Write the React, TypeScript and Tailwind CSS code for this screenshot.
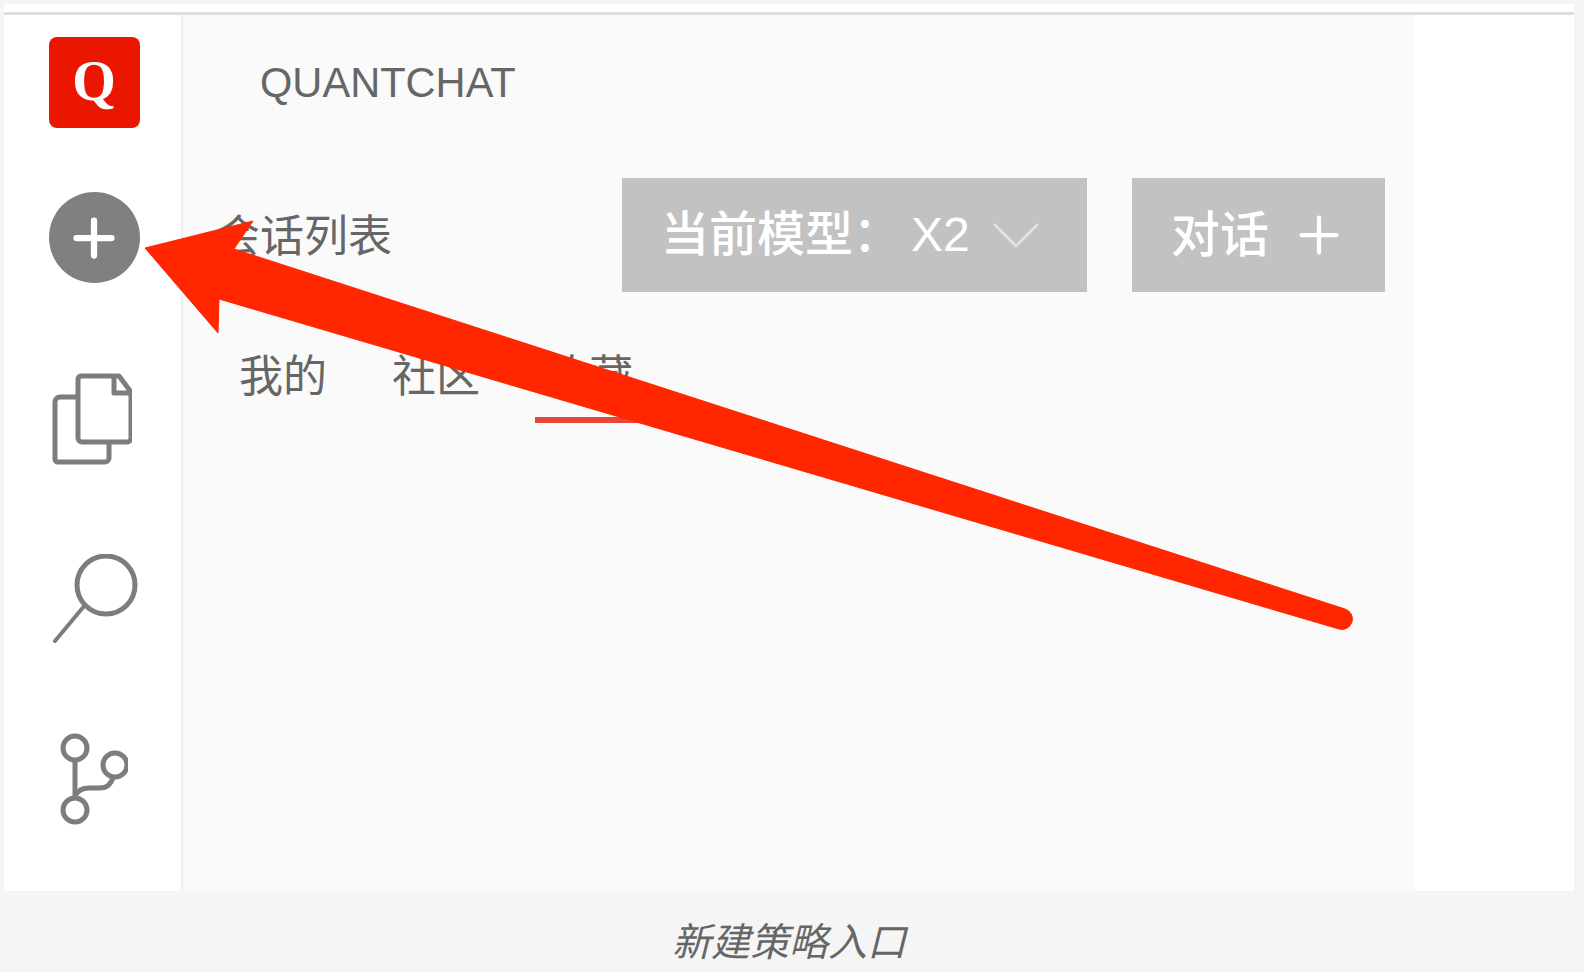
import { Plus } from 'lucide-react'

const cjk = 'font-["Liberation_Sans","Noto_Sans_CJK_SC",sans-serif]'

function Sidebar() {
  return (
    <div className="flex w-[179px] shrink-0 flex-col items-center border-r-2 border-[#efeff1] bg-white pt-[22px] pl-[3px]">
      <div className="flex h-[91px] w-[91px] items-center justify-center rounded-lg bg-[#ea1600]">
        <span className='mt-[-3px] font-["Liberation_Serif",serif] text-[56px] leading-none font-bold text-white'>Q</span>
      </div>
      <div className="mt-[64px] flex h-[91px] w-[91px] items-center justify-center rounded-full bg-[#808080]">
        <Plus className="h-[60px] w-[60px] text-white" strokeWidth={2.5} />
      </div>
      {/* files */}
      <svg className="mt-[90px] ml-[-4px]" width="80" height="92" viewBox="0 0 80 92" fill="none" stroke="#7d7d7d" strokeWidth="5" strokeLinejoin="round">
        <path d="M25 24H8a5 5 0 0 0-5 5v57a3 3 0 0 0 3 3h47a4 4 0 0 0 4-4V70" />
        <path d="M29 3h38l12 16v46a4 4 0 0 1-4 4H30a4 4 0 0 1-4-4V7a4 4 0 0 1 3-4z" />
        <path d="M62 3v17h17" />
      </svg>
      {/* search */}
      <svg className="mt-[89px] ml-[3px]" width="86" height="90" viewBox="0 0 86 90" fill="none" stroke="#7d7d7d" strokeWidth="5" strokeLinecap="round">
        <circle cx="53" cy="31" r="29" />
        <path d="M32 51 2 87" strokeWidth="4" />
      </svg>
      {/* branch */}
      <svg className="mt-[89px] ml-[-2px]" width="70" height="92" viewBox="0 0 70 92" fill="none" stroke="#7d7d7d" strokeWidth="5">
        <circle cx="17" cy="15" r="12" />
        <circle cx="57" cy="32" r="12" />
        <circle cx="17" cy="77" r="12" />
        <path d="M17 27v38" />
        <path d="M17 63c3-6 7-8 14-8h11c7 0 10-3 13-10" />
      </svg>
    </div>
  )
}

function Panel() {
  return (
    <div className={`flex w-[1232px] shrink-0 flex-col bg-[#fafafa] ${cjk} text-[#666666]`}>
      <div className="h-[163px] pt-[47px] pl-[77px] text-[41.6px] leading-none">QUANTCHAT</div>
      <div className="flex h-[114px] items-center pr-[30px] pl-[33px]">
        <span className="pt-[3px] text-[44px] leading-none">会话列表</span>
        <div className="ml-[230px] flex h-[114px] w-[465px] items-center bg-[#c2c2c2] pl-[39px] text-[48px] leading-none font-medium text-white">
          <span>当前模型：</span>
          <span className="ml-[10px]">X2</span>
          <svg className="ml-[23px]" width="46" height="25" viewBox="0 0 46 25" fill="none" stroke="#e4e4e4" strokeWidth="2.5">
            <path d="M1 1 23 23 45 1" />
          </svg>
        </div>
        <div className="ml-[45px] flex h-[114px] w-[253px] items-center bg-[#c2c2c2] pl-[39px] text-[49px] leading-none font-medium text-white">
          <span>对话</span>
          <Plus className="ml-[20px] h-[60px] w-[60px]" strokeWidth={1.7} />
        </div>
      </div>
      <div className="mt-[63px] flex pl-[56px] text-[44px] leading-none">
        <span>我的</span>
        <span className="ml-[65px]">社区</span>
        <span className="ml-[55px] h-[68px] border-b-[6px] border-[#e8483c] px-[10px]">收藏</span>
      </div>
    </div>
  )
}

export default function App() {
  return (
    <div className={`relative flex h-[972px] w-[1584px] flex-col overflow-hidden bg-[#f5f5f5] ${cjk}`}>
      <div className="mt-1 ml-1 flex h-[887px] w-[1570px] flex-col bg-white">
        <div className="mt-2 h-[3px] bg-[#dedee2]" />
        <div className="flex min-h-0 flex-1">
          <Sidebar />
          <Panel />
        </div>
      </div>
      <div className="flex flex-1 items-center justify-center pt-[22px] pr-[6px] text-[39px] leading-none text-[#666666] italic">
        新建策略入口
      </div>
      {/* annotation arrow */}
      <svg className="absolute top-0 left-0" width="1584" height="972" viewBox="0 0 1584 972" fill="#ff2600">
        <path
          d="M145 248 253 221 234 249 1345 609a10 10 0 0 1-6 20L219 299 218 333Z"
          stroke="#ff2600"
          strokeWidth="1"
          strokeLinejoin="round"
        />
      </svg>
    </div>
  )
}
